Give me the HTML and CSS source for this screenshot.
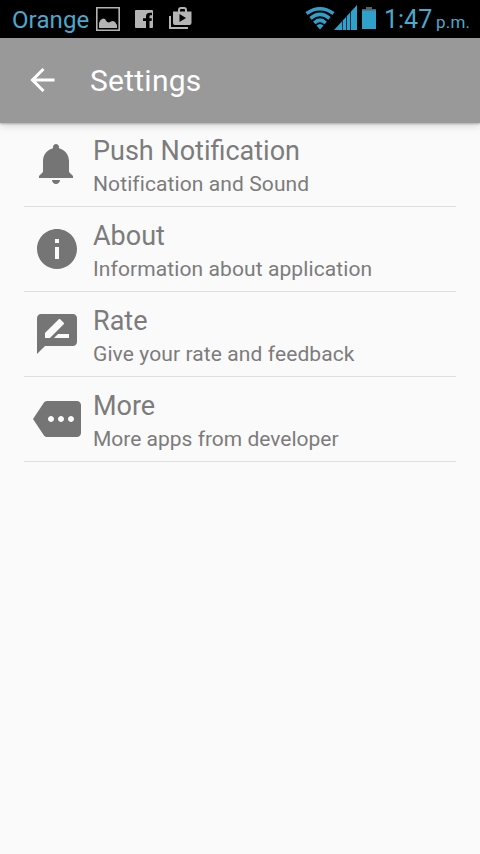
FILE: index.html
```html
<!DOCTYPE html>
<html lang="en">
<head>
<meta charset="utf-8">
<title>Settings</title>
<link rel="stylesheet" href="styles.css">
</head>
<body>
<header class="status">
  <span class="carrier">Orange</span>
  <svg class="s-photo" width="24" height="24" viewBox="0 0 24 24"><path fill="none" stroke="#b4b4b4" stroke-width="1.6" d="M.8.8h22.4v22.4H.8z"/><path fill="#b4b4b4" d="M3 21v-5l1.500-3L7 11.500 9 12l2 3 2 .5 2-1 2-.5 2 1 2 3v3z"/></svg>
  <svg class="s-fb" width="18" height="18" viewBox="0 0 18 18"><path fill="#b4b4b4" d="M1 0h16q1 0 1 1v16q0 1-1 1h-2.500v-7h2l.4-2.700h-2.400V6.600c0-.8.3-1.300 1.400-1.300h1.100V2.800h-2c-2.800 0-4 1.400-4 3.500v2H8V11h3v7H1q-1 0-1-1V1q0-1 1-1z"/></svg>
  <svg class="s-shop" width="23" height="23" viewBox="0 0 23 23"><path fill="none" stroke="#b4b4b4" stroke-width="2" d="M1 9v12h18M10 5V3q0-2 2-2h3q2 0 2 2v2"/><path fill="#b4b4b4" fill-rule="evenodd" d="M4 4.500h18.500V16q0 2-2 2H6q-2 0-2-2zM10.500 7v8l6.500-4z"/></svg>
  <svg class="s-wifi" width="30" height="24" viewBox="0 0 30 24"><g fill="none" stroke="#309fc9" stroke-width="3.600"><path d="M1.500 7.500Q15-2 28.500 7.500"/><path d="M5.500 12.300Q15 4.500 24.500 12.300"/><path d="M9.300 17Q15 11.500 20.700 17"/></g><path fill="#309fc9" d="M11.500 19.500Q15 16.500 18.500 19.500L15 23.500z"/></svg>
  <svg class="s-signal" width="23" height="25" viewBox="0 0 23 25"><path fill="#309fc9" d="M0 25L23 0v25z"/><path stroke="#063247" stroke-width="1" d="M8.500 15v10M12.500 11v14M16.500 7v18"/></svg>
  <svg class="s-battery" width="14" height="22" viewBox="0 0 14 22"><path fill="#55626a" d="M4 0h6v2h4v2H0V2h4z"/><path fill="#309fc9" d="M0 3.500h14V22H0z"/></svg>
  <span class="clock">1:47</span><span class="ampm">p.m.</span>
</header>
<div class="appbar">
  <svg class="back" width="25" height="24" viewBox="0 0 25 24"><path fill="none" stroke="#fff" stroke-width="3" d="M24.500 12H2.500M13.500 1L2.500 12l11 11"/></svg>
  <h1 class="heading">Settings</h1>
</div>
<main class="list">
  <div class="row">
    <svg class="icon" viewBox="0 0 24 24"><path d="M11.500 22c1.100 0 2-.9 2-2h-4c0 1.100.9 2 2 2zm6.500-6v-5.500c0-3.070-2.130-5.640-5-6.320V3.500c0-.83-.67-1.500-1.500-1.500S10 2.670 10 3.500v.68c-2.870.68-5 3.250-5 6.320V16l-2 2v1h17v-1l-2-2z"/></svg>
    <div><div class="title">Push Notification</div><div class="sub">Notification and Sound</div></div>
  </div>
  <div class="row">
    <svg class="icon" viewBox="0 0 24 24"><path d="M12 2C6.480 2 2 6.480 2 12s4.480 10 10 10 10-4.480 10-10S17.520 2 12 2zm1 15h-2v-6h2v6zm0-8h-2V7h2v2z"/></svg>
    <div><div class="title">About</div><div class="sub">Information about application</div></div>
  </div>
  <div class="row">
    <svg class="icon" viewBox="0 0 24 24"><path d="M20 2H4c-1.100 0-1.990.9-1.990 2L2 22l4-4h14c1.100 0 2-.9 2-2V4c0-1.100-.9-2-2-2zM6 14v-2.470l6.880-6.880c.2-.2.510-.2.710 0l1.770 1.770c.2.2.2.510 0 .710L8.470 14H6zm12 0h-7.500l2-2H18v2z"/></svg>
    <div><div class="title">Rate</div><div class="sub">Give your rate and feedback</div></div>
  </div>
  <div class="row">
    <svg class="icon" viewBox="0 0 24 24"><path d="M22 3H7c-.69 0-1.230.35-1.590.88L0 12l5.410 8.110c.36.530.9.890 1.590.890h15c1.100 0 2-.9 2-2V5c0-1.100-.9-2-2-2zM9 13.500c-.83 0-1.500-.67-1.500-1.500s.67-1.500 1.500-1.500 1.500.67 1.500 1.500-.67 1.500-1.500 1.500zm5 0c-.83 0-1.500-.67-1.500-1.500s.67-1.500 1.500-1.500 1.500.67 1.500 1.500-.67 1.500-1.500 1.500zm5 0c-.83 0-1.500-.67-1.500-1.500s.67-1.500 1.500-1.500 1.500.67 1.500 1.500-.67 1.500-1.500 1.500z"/></svg>
    <div><div class="title">More</div><div class="sub tight">More apps from developer</div></div>
  </div>
</main>
</body>
</html>
```
FILE: styles.css
```css
* { box-sizing: border-box; }
body { margin: 0; height: 854px; overflow: hidden; background: #fafafa; font-family: Roboto, sans-serif; }
svg { display: block; flex: none; }
.status { height: 38px; background: #000; display: flex; align-items: flex-start; color: #4aa9cd; padding-left: 12px; white-space: nowrap; }
.carrier { width: 84px; font-size: 24px; line-height: 28px; margin-top: 6px; letter-spacing: .1px; }
.s-photo { margin-top: 7px; }
.s-fb { margin: 10px 0 0 15px; }
.s-shop { margin: 7px 0 0 16px; }
.s-wifi { margin: 6px 0 0 113px; }
.s-signal { margin: 5px 0 0 -1px; }
.s-battery { margin: 7px 0 0 5px; }
.clock { width: 52px; font-size: 25px; line-height: 28px; margin: 6px 0 0 8px; }
.ampm { font-size: 17px; line-height: 20px; margin-top: 12px; letter-spacing: .2px; }
.appbar { height: 85px; background: #999; display: flex; align-items: center; padding-left: 30px; box-shadow: 0 1px 2px rgba(0,0,0,.25), 0 3px 8px rgba(0,0,0,.14); position: relative; }
.back { margin-top: -1px; }
.heading { margin: 0 0 0 35px; font-size: 30px; font-weight: 400; line-height: 36px; color: #fff; letter-spacing: .25px; }
.list { margin: -1px 24px 0; }
.row { height: 85px; display: flex; padding: 13px 0 0 9px; border-bottom: 1px solid #dfdfdf; color: #7c7c7c; white-space: nowrap; }
.icon { width: 48px; height: 48px; margin: 5px 12px 0 0; fill: #757575; }
.title { font-size: 27px; line-height: 32px; }
.sub { font-size: 21px; line-height: 26px; margin-top: 4px; letter-spacing: .1px; }
.tight { letter-spacing: 0; }
```
